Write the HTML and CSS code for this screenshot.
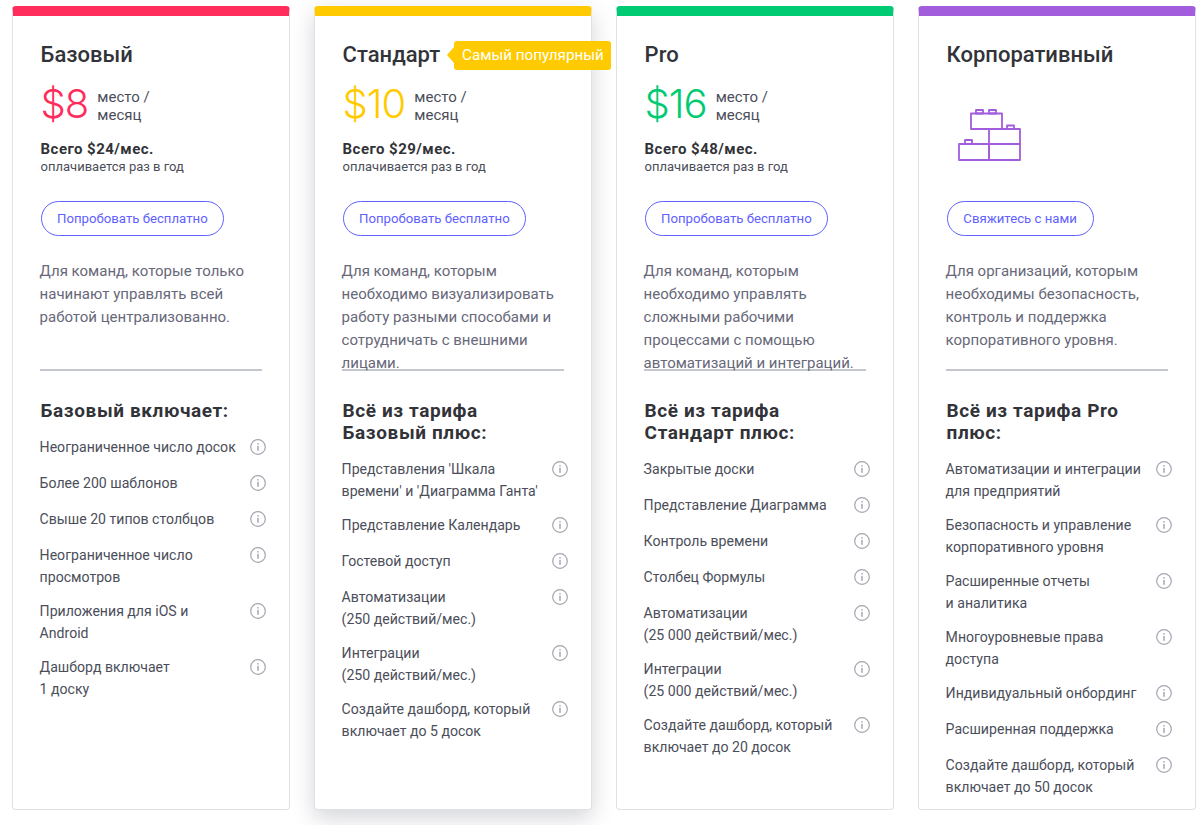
FILE: index.html
```html
<!DOCTYPE html>
<html lang="ru">
<head>
<meta charset="utf-8">
<title>Тарифы</title>
<link rel="stylesheet" href="styles.css">
</head>
<body>
<svg class="defs" width="0" height="0" aria-hidden="true">
  <symbol id="info" viewBox="0 0 16 16">
    <circle cx="8" cy="8" r="7.3" fill="none" stroke="#a3a5b0" stroke-width="1.2"/>
    <rect x="7.4" y="6.8" width="1.2" height="5" fill="#8f919e"/>
    <rect x="7.4" y="4.1" width="1.2" height="1.4" fill="#8f919e"/>
  </symbol>
</svg>
<main class="plans">
  <section class="card card-red">
    <h2 class="name">Базовый</h2>
    <div class="price"><span class="amount">$8</span><span class="per">место /<br>месяц</span></div>
    <p class="total">Всего $24/мес.</p>
    <p class="billing">оплачивается раз в год</p>
    <a class="cta">Попробовать бесплатно</a>
    <p class="desc">Для команд, которые только начинают управлять всей работой централизованно.</p>
    <hr class="rule">
    <h3 class="inc">Базовый включает:</h3>
    <ul class="features">
      <li><span>Неограниченное число досок</span><svg class="i"><use href="#info"/></svg></li>
      <li><span>Более 200 шаблонов</span><svg class="i"><use href="#info"/></svg></li>
      <li><span>Свыше 20 типов столбцов</span><svg class="i"><use href="#info"/></svg></li>
      <li><span>Неограниченное число<br>просмотров</span><svg class="i"><use href="#info"/></svg></li>
      <li><span>Приложения для iOS и<br>Android</span><svg class="i"><use href="#info"/></svg></li>
      <li><span>Дашборд включает<br>1 доску</span><svg class="i"><use href="#info"/></svg></li>
    </ul>
  </section>
  <section class="card card-yellow">
    <h2 class="name">Стандарт</h2>
    <div class="tag">Самый популярный</div>
    <div class="price"><span class="amount">$10</span><span class="per">место /<br>месяц</span></div>
    <p class="total">Всего $29/мес.</p>
    <p class="billing">оплачивается раз в год</p>
    <a class="cta">Попробовать бесплатно</a>
    <p class="desc">Для команд, которым необходимо визуализировать работу разными способами и сотрудничать с внешними лицами.</p>
    <hr class="rule">
    <h3 class="inc">Всё из тарифа<br>Базовый плюс:</h3>
    <ul class="features">
      <li><span>Представления 'Шкала<br>времени' и 'Диаграмма Ганта'</span><svg class="i"><use href="#info"/></svg></li>
      <li><span>Представление Календарь</span><svg class="i"><use href="#info"/></svg></li>
      <li><span>Гостевой доступ</span><svg class="i"><use href="#info"/></svg></li>
      <li><span>Автоматизации<br>(250 действий/мес.)</span><svg class="i"><use href="#info"/></svg></li>
      <li><span>Интеграции<br>(250 действий/мес.)</span><svg class="i"><use href="#info"/></svg></li>
      <li><span>Создайте дашборд, который<br>включает до 5 досок</span><svg class="i"><use href="#info"/></svg></li>
    </ul>
  </section>
  <section class="card card-green">
    <h2 class="name">Pro</h2>
    <div class="price"><span class="amount">$16</span><span class="per">место /<br>месяц</span></div>
    <p class="total">Всего $48/мес.</p>
    <p class="billing">оплачивается раз в год</p>
    <a class="cta">Попробовать бесплатно</a>
    <p class="desc">Для команд, которым необходимо управлять сложными рабочими процессами с помощью автоматизаций и интеграций.</p>
    <hr class="rule">
    <h3 class="inc">Всё из тарифа<br>Стандарт плюс:</h3>
    <ul class="features">
      <li><span>Закрытые доски</span><svg class="i"><use href="#info"/></svg></li>
      <li><span>Представление Диаграмма</span><svg class="i"><use href="#info"/></svg></li>
      <li><span>Контроль времени</span><svg class="i"><use href="#info"/></svg></li>
      <li><span>Столбец Формулы</span><svg class="i"><use href="#info"/></svg></li>
      <li><span>Автоматизации<br>(25 000 действий/мес.)</span><svg class="i"><use href="#info"/></svg></li>
      <li><span>Интеграции<br>(25 000 действий/мес.)</span><svg class="i"><use href="#info"/></svg></li>
      <li><span>Создайте дашборд, который<br>включает до 20 досок</span><svg class="i"><use href="#info"/></svg></li>
    </ul>
  </section>
  <section class="card card-purple">
    <h2 class="name">Корпоративный</h2>
    <div class="bricks">
      <svg width="64" height="54" viewBox="0 0 64 54" fill="none" stroke="#a25ddc" stroke-width="1.8" stroke-linejoin="round">
        <rect x="13" y="4.5" width="31" height="15.5"/>
        <rect x="31" y="20" width="31" height="15"/>
        <rect x="1" y="35" width="30" height="16"/>
        <rect x="31" y="35" width="31" height="16"/>
        <rect x="18" y="1" width="7" height="3.5"/>
        <rect x="31" y="1" width="7" height="3.5"/>
        <rect x="49" y="16.5" width="7" height="3.5"/>
        <rect x="7" y="31" width="7" height="4"/>
      </svg>
    </div>
    <a class="cta cta-contact">Свяжитесь с нами</a>
    <p class="desc">Для организаций, которым необходимы безопасность, контроль и поддержка корпоративного уровня.</p>
    <hr class="rule">
    <h3 class="inc">Всё из тарифа Pro<br>плюс:</h3>
    <ul class="features">
      <li><span>Автоматизации и интеграции<br>для предприятий</span><svg class="i"><use href="#info"/></svg></li>
      <li><span>Безопасность и управление<br>корпоративного уровня</span><svg class="i"><use href="#info"/></svg></li>
      <li><span>Расширенные отчеты<br>и аналитика</span><svg class="i"><use href="#info"/></svg></li>
      <li><span>Многоуровневые права<br>доступа</span><svg class="i"><use href="#info"/></svg></li>
      <li><span>Индивидуальный онбординг</span><svg class="i"><use href="#info"/></svg></li>
      <li><span>Расширенная поддержка</span><svg class="i"><use href="#info"/></svg></li>
      <li><span>Создайте дашборд, который<br>включает до 50 досок</span><svg class="i"><use href="#info"/></svg></li>
    </ul>
  </section>
</main>
</body>
</html>
```
FILE: styles.css
```css
* { box-sizing: border-box; }
html, body { margin: 0; height: 825px; overflow: hidden; background: #fff; }
body { font-family: Roboto, "Liberation Sans", sans-serif; color: #323338; }
.defs { position: absolute; }
.plans {
  display: grid;
  grid-template-columns: repeat(4, 278px);
  column-gap: 24px;
  padding: 6px 0 0 12px;
}
.card {
  position: relative;
  height: 804px;
  padding: 0 24px 0 27.6px;
  border: 1px solid #e0e1e6;
  border-top: 10px solid;
  border-radius: 4px;
  background: #fff;
}
.card-red { border-top-color: #ff2d5c; --accent: #ff2d5c; }
.card-yellow { border-top-color: #ffcb00; --accent: #ffcb00; box-shadow: 0 8px 22px rgba(60, 64, 80, .22); }
.card-green { border-top-color: #00ca72; --accent: #00ca72; }
.card-purple { border-top-color: #a25ddc; --accent: #a25ddc; }
.name { margin: 0; padding-top: 26px; font-size: 22px; line-height: 26px; font-weight: 500; }
.tag {
  position: absolute;
  top: 25px;
  left: 139px;
  width: 157px;
  height: 29px;
  padding-left: 8px;
  border-radius: 3px;
  background: #ffcb00;
  color: #fff;
  font-size: 15.2px;
  line-height: 29px;
  white-space: nowrap;
}
.tag::before {
  content: "";
  position: absolute;
  left: -7px;
  top: 6px;
  border-style: solid;
  border-width: 8px 7px 8px 0;
  border-color: transparent #ffcb00 transparent transparent;
}
.price { display: flex; align-items: center; margin-top: 11px; height: 46px; }
.amount { font-family: Inter, sans-serif; font-size: 40px; letter-spacing: -1px; font-weight: 300; line-height: 46px; color: var(--accent); margin-right: 9px; position: relative; top: 2px; }
.per { font-size: 15px; line-height: 18px; color: #4b4e5a; position: relative; top: 4px; }
.total { margin: 14px 0 0; font-size: 15px; line-height: 20px; font-weight: 700; letter-spacing: .45px; }
.billing { margin: 0; font-size: 13px; line-height: 16px; color: #4b4e5a; }
.cta {
  display: inline-block;
  margin-top: 26px;
  height: 35px;
  width: 183.5px;
  border: 1px solid #6161ff;
  border-radius: 18px;
  color: #6161ff;
  font-size: 13.2px;
  line-height: 33px;
  text-align: center;
  vertical-align: top;
}
.cta-contact { width: 147px; margin-top: 38px; }
.bricks { height: 54px; margin-top: 41px; margin-left: 11.5px; }
.bricks svg { display: block; }
.desc {
  margin: 24px 0 0 -1px;
  height: 109px;
  width: 226px;
  font-size: 15px;
  line-height: 23px;
  color: #676879;
}
.rule { margin: 0 0 0 -1px; width: 222px; height: 2px; border: 0; background: #c5c7d0; }
.inc { margin: 29px 0 0; font-size: 19px; line-height: 22px; font-weight: 700; letter-spacing: .6px; }
.features { list-style: none; margin: 14px 0 0 -1px; padding: 0; }
.features li { display: flex; justify-content: space-between; align-items: flex-start; margin-bottom: 12px; min-height: 24px; width: 226px; font-size: 14.1px; line-height: 22px; color: #4b4e5a; }
.i { flex: none; width: 16px; height: 16px; margin-top: 3px; }
```
